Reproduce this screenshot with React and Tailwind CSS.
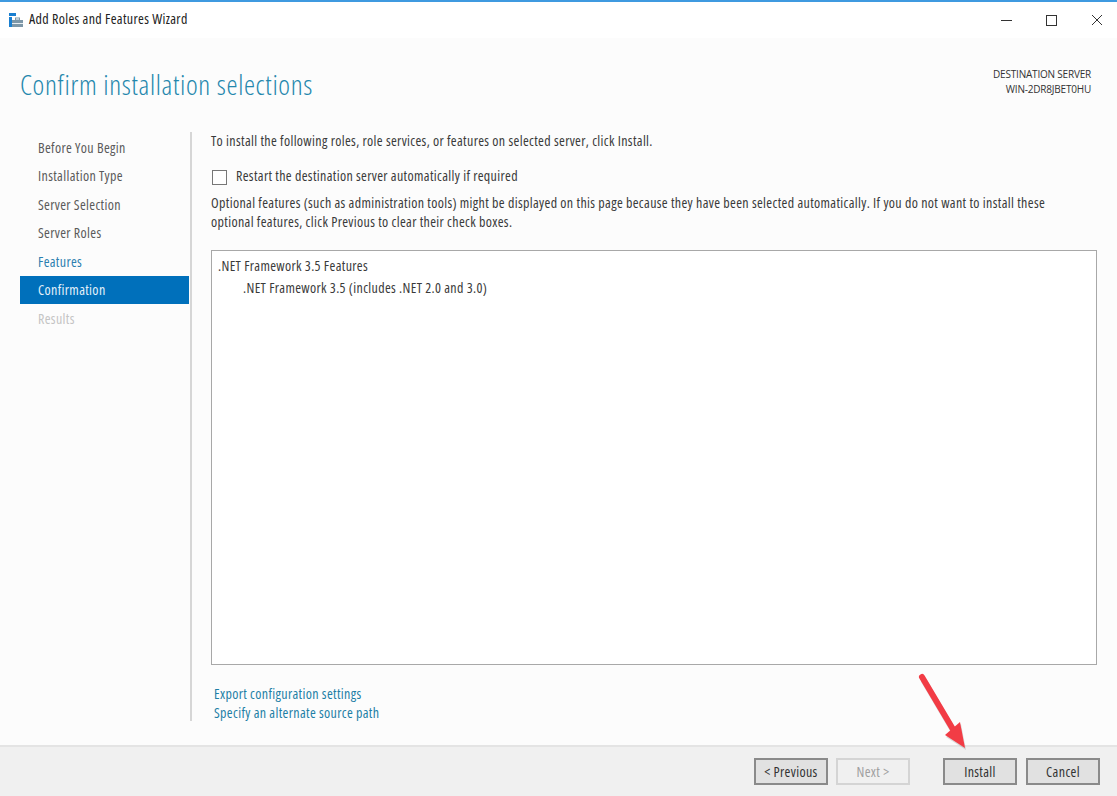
import React from "react";

const steps = [
    { label: "Before You Begin", color: "text-[#5a5a5a]" },
    { label: "Installation Type", color: "text-[#5a5a5a]" },
    { label: "Server Selection", color: "text-[#5a5a5a]" },
    { label: "Server Roles", color: "text-[#5a5a5a]" },
    { label: "Features", color: "text-[#2c7fb0]" },
    { label: "Confirmation", color: "text-[#e4f1fa] bg-[#0070bb]" },
    { label: "Results", color: "text-[#c4c4c4]" },
];

function WizardIcon() {
    return (
        <svg width="16" height="16" viewBox="0 0 16 16">
            <rect x="1" y="1" width="7" height="3" fill="#1a7fd0" />
            <rect x="1" y="5" width="3" height="10" fill="#1a7fd0" />
            <rect x="4" y="8" width="11" height="7" fill="#7d97a8" />
            <rect x="7.5" y="6" width="4" height="2" fill="none" stroke="#7d97a8" strokeWidth="1" />
            <rect x="4" y="11" width="11" height="1" fill="#e8eef2" />
        </svg>
    );
}

function WizardButton({ label, disabled }) {
    return (
        <button
            className={
                "w-[74px] h-[27px] border-2 " +
                (disabled
                    ? "border-[#d4d4d4] bg-[#f0f0f0] text-[#a0a0a0]"
                    : "border-[#8a8a8a] bg-[#e1e1e1] text-[#333333]")
            }
        >
            {label}
        </button>
    );
}

export default function App() {
    return (
        <div className="relative w-[1117px] h-[796px] overflow-hidden flex flex-col bg-[#fcfcfc] font-['Open_Sans',sans-serif] font-stretch-[75%] text-[14px] tracking-[0.35px] text-[#3a3a3a]">
            <div className="h-[2px] bg-[#3f9ae0]" />

            {/* title bar */}
            <div className="h-[36px] bg-white flex items-center justify-between">
                <div className="flex items-center pl-[8px] gap-[5px]">
                    <WizardIcon />
                    <span className="pb-[4px] text-[#222222]">Add Roles and Features Wizard</span>
                </div>
                <div className="flex items-center gap-[34px] pr-[14px]">
                    <div className="w-[11px] h-[1px] bg-[#333333]" />
                    <div className="w-[11px] h-[11px] border border-[#333333]" />
                    <svg width="12" height="12" viewBox="0 0 12 12">
                        <path d="M1 1 L11 11 M11 1 L1 11" stroke="#333333" strokeWidth="1" fill="none" />
                    </svg>
                </div>
            </div>

            {/* page heading */}
            <div className="h-[94px] flex justify-between pl-[20px] pr-[26px]">
                <h1 className="mt-[27px] text-[28px] leading-[38px] font-light tracking-[0.65px] text-[#2487ad]">
                    Confirm installation selections
                </h1>
                <div className="mt-[29px] text-right text-[10px] leading-[15px] font-stretch-normal tracking-[-0.2px] text-[#333333]">
                    <div>DESTINATION SERVER</div>
                    <div>WIN-2DR8JBET0HU</div>
                </div>
            </div>

            {/* body */}
            <div className="h-[589px] flex pl-[20px]">
                <div className="w-[169px] pt-[1px]">
                    {steps.map((step) => (
                        <div key={step.label} className={"h-[28.5px] flex items-center pl-[18px] " + step.color}>
                            {step.label}
                        </div>
                    ))}
                </div>
                <div className="w-[2px] ml-[1px] bg-[#d6d6d6]" />
                <div className="w-[886px] ml-[19px] flex flex-col">
                    <div className="leading-[18px]">
                        To install the following roles, role services, or features on selected server, click Install.
                    </div>
                    <div className="mt-[18px] flex items-center h-[18px]">
                        <div className="w-[15px] h-[15px] ml-[1px] border border-[#777777] bg-white" />
                        <span className="ml-[9px] pb-[3px]">Restart the destination server automatically if required</span>
                    </div>
                    <div className="mt-[7px] pr-[30px] leading-[19px]">
                        Optional features (such as administration tools) might be displayed on this page because they have been selected automatically. If you do not want to install these optional features, click Previous to clear their check boxes.
                    </div>
                    <div className="mt-[19px] h-[415px] shrink-0 border border-[#a8a8a8] bg-white pl-[6px] pt-[5px]">
                        <div className="leading-[20px]">.NET Framework 3.5 Features</div>
                        <div className="leading-[24px] pl-[25px]">.NET Framework 3.5 (includes .NET 2.0 and 3.0)</div>
                    </div>
                    <div className="mt-[19px] pl-[3px] text-[#1e7fa6] leading-[19px]">
                        <div>Export configuration settings</div>
                        <div>Specify an alternate source path</div>
                    </div>
                </div>
            </div>

            {/* footer */}
            <div className="mt-[24px] h-[51px] bg-[#f0f0f0] border-t-2 border-[#e4e4e4] flex items-center justify-end pr-[17px]">
                <WizardButton label="< Previous" />
                <div className="ml-[8px]">
                    <WizardButton label="Next >" disabled />
                </div>
                <div className="ml-[33px]">
                    <WizardButton label="Install" />
                </div>
                <div className="ml-[9px]">
                    <WizardButton label="Cancel" />
                </div>
            </div>

            {/* red annotation arrow */}
            <svg className="absolute left-[910px] top-[665px]" width="70" height="95" viewBox="0 0 70 95">
                <path d="M13 14 L46 70" stroke="#9a9a9a" strokeWidth="6" strokeLinecap="round" opacity="0.35" transform="translate(1 2)" />
                <path d="M35 70 L50 57 L55 83 Z" fill="#9a9a9a" opacity="0.35" transform="translate(1 2)" />
                <path d="M12 12 L44 66" stroke="#f23c45" strokeWidth="6" strokeLinecap="round" fill="none" />
                <path d="M35 70 L50 57 L55 83 Z" fill="#f23c45" />
            </svg>
        </div>
    );
}
